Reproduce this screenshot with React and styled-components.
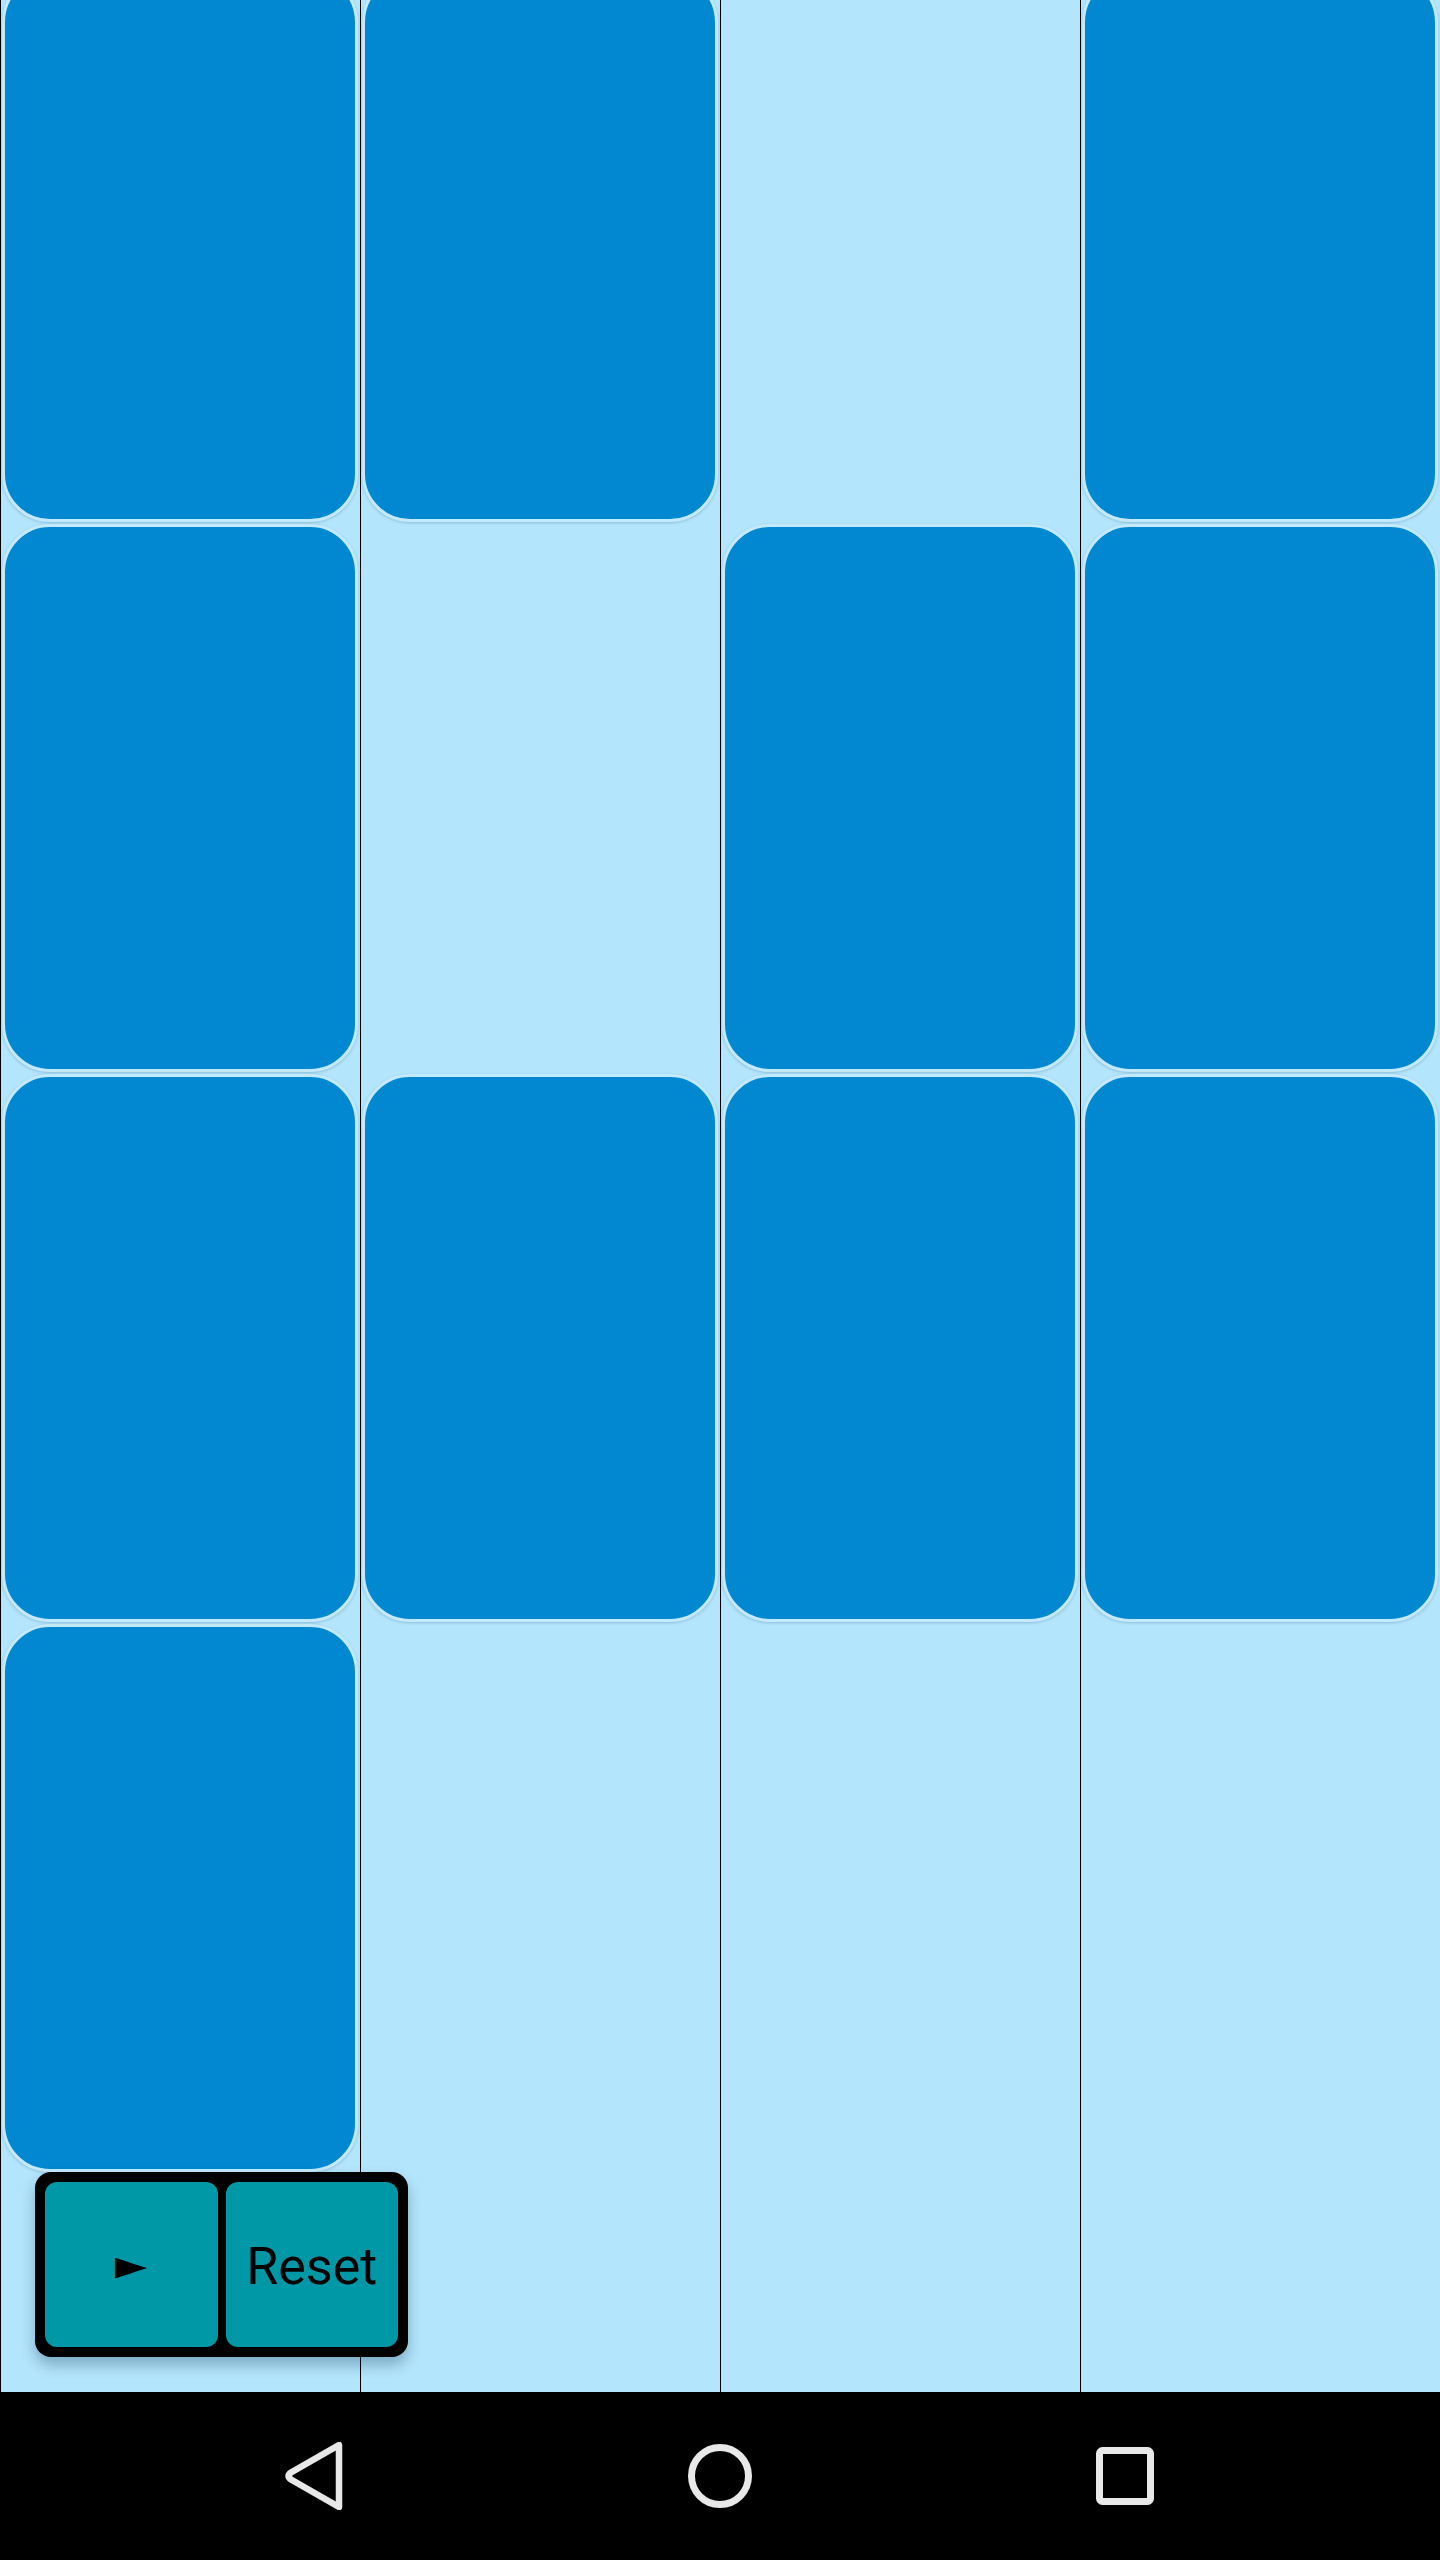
import React from "react";
import styled, { createGlobalStyle } from "styled-components";

const GlobalStyle = createGlobalStyle`
  html, body {
    margin: 0;
    padding: 0;
    background: #b3e5fc;
    font-family: Roboto, "Liberation Sans", sans-serif;
  }
`;

const Screen = styled.div`
  width: 1440px;
  height: 2560px;
  display: flex;
  flex-direction: column;
  overflow: hidden;
`;

const Board = styled.div`
  position: relative;
  height: 2392px;
  display: grid;
  grid-template-columns: repeat(4, 360px);
  background: #b3e5fc;
  overflow: hidden;
`;

const Column = styled.div`
  border-left: 1px solid #000;
  padding: 0 2px 0 1px;
  margin-top: -26px;
  display: grid;
  grid-template-rows: repeat(4, 548px);
  row-gap: 2px;
  align-content: start;
`;

const Card = styled.div`
  background: #0288d1;
  border: 3px solid #c2eafc;
  border-radius: 48px;
  box-shadow: 0 1px 3px rgba(0, 50, 90, 0.22);
`;

const Slot = styled.div``;

const Controls = styled.div`
  position: absolute;
  left: 35px;
  top: 2172px;
  width: 373px;
  height: 185px;
  box-sizing: border-box;
  padding: 10px;
  display: flex;
  gap: 8px;
  background: #000;
  border-radius: 16px;
  box-shadow: 0 8px 14px rgba(0, 40, 70, 0.3);
`;

const Button = styled.button`
  flex: 1;
  border: none;
  border-radius: 12px;
  background: #0097a7;
  color: #000;
  font-family: ${(p) => (p.$glyph ? '"DejaVu Sans", sans-serif' : 'Roboto, "Liberation Sans", sans-serif')};
  font-size: ${(p) => (p.$glyph ? "42px" : "52px")};
  padding: ${(p) => (p.$glyph ? "0" : "4px 0 0")};
  display: flex;
  align-items: center;
  justify-content: center;
  cursor: pointer;
`;

const NavBar = styled.nav`
  height: 168px;
  background: #000;
  display: flex;
  align-items: center;
  justify-content: center;
  gap: 341px;
`;

const NavIcon = styled.svg`
  width: 64px;
  height: 68px;
  display: block;
`;

const layout = [
  [true, true, true, true],
  [true, false, true, false],
  [false, true, true, false],
  [true, true, true, false],
];

export default function App() {
  return (
    <Screen>
      <GlobalStyle />
      <Board>
        {layout.map((col, i) => (
          <Column key={i}>
            {col.map((filled, j) => (filled ? <Card key={j} /> : <Slot key={j} />))}
          </Column>
        ))}
        <Controls>
          <Button $glyph>►</Button>
          <Button>Reset</Button>
        </Controls>
      </Board>
      <NavBar>
        <NavIcon viewBox="0 0 64 68">
          <path
            d="M56 3 L56 65 L8 37.5 Q3 34 8 30.5 Z"
            fill="none"
            stroke="#e8e8e8"
            strokeWidth="6.5"
            strokeLinejoin="round"
          />
        </NavIcon>
        <NavIcon viewBox="0 0 64 68">
          <circle cx="32" cy="34" r="28.5" fill="none" stroke="#e8e8e8" strokeWidth="7" />
        </NavIcon>
        <NavIcon viewBox="0 0 64 68">
          <rect x="6.5" y="8.5" width="51" height="51" rx="3" fill="none" stroke="#e8e8e8" strokeWidth="7" />
        </NavIcon>
      </NavBar>
    </Screen>
  );
}
